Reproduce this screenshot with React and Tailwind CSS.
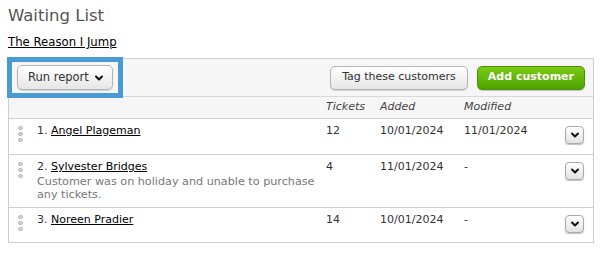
import React from "react";

function Handle() {
  return (
    <div className="flex flex-col gap-[2px] pt-[3px] w-[6px] items-center">
      <span className="block w-[5px] h-[4px] rounded-full bg-[#d4d4d4] border border-[#bdbdbd]" />
      <span className="block w-[5px] h-[4px] rounded-full bg-[#d4d4d4] border border-[#bdbdbd]" />
      <span className="block w-[5px] h-[4px] rounded-full bg-[#d4d4d4] border border-[#bdbdbd]" />
    </div>
  );
}

function Chevron({ className = "" }) {
  return (
    <svg viewBox="0 0 10 10" className={className}>
      <path d="M2 3.5 L5 6.5 L8 3.5" fill="none" stroke="#111" strokeWidth="2" strokeLinecap="round" strokeLinejoin="round" />
    </svg>
  );
}

function MenuBtn() {
  return (
    <button className="w-[19px] h-[18px] rounded-[4px] border border-[#a9a9a9] bg-gradient-to-b from-white to-[#e2e2e2] shadow-[0_1px_1px_rgba(0,0,0,0.25)] flex items-center justify-center">
      <Chevron className="w-[10px] h-[10px]" />
    </button>
  );
}

const rows = [
  { n: 1, name: "Angel Plageman", t: "12", a: "10/01/2024", m: "11/01/2024", h: "h-[36px]" },
  { n: 2, name: "Sylvester Bridges", note: "Customer was on holiday and unable to purchase any tickets.", t: "4", a: "11/01/2024", m: "-", h: "h-[53px]" },
  { n: 3, name: "Noreen Pradier", t: "14", a: "10/01/2024", m: "-", h: "h-[34px]" },
];

export default function App() {
  return (
    <div className="w-[604px] h-[255px] bg-white px-[8px] pt-[5px] text-[11px] text-[#333]" style={{ fontFamily: "Verdana, 'DejaVu Sans', sans-serif" }}>
      <h1 className="text-[16.5px] leading-[22px] text-[#555] font-normal">Waiting List</h1>
      <a className="block mt-[8px] text-[11.7px] leading-[14px] text-black underline">The Reason I Jump</a>
      <div className="relative mt-[9px] w-[586px] border border-[#cfcfcf]">
        <div className="h-[38px] bg-[#f6f6f6] border-b border-[#d9d9d9] flex items-center px-[8px]">
          <button className="h-[25px] pl-[10px] pr-[8px] rounded-[5px] border border-[#b3b3b3] bg-gradient-to-b from-white to-[#e6e6e6] shadow-[0_1px_1px_rgba(0,0,0,0.15)] flex items-center gap-[5px] text-[11.5px] text-[#333]">
            Run report
            <Chevron className="w-[10px] h-[10px]" />
          </button>
          <div className="flex-1" />
          <button className="h-[24px] px-[11px] rounded-[5px] border border-[#b3b3b3] bg-gradient-to-b from-white to-[#e6e6e6] shadow-[0_1px_1px_rgba(0,0,0,0.15)] text-[11px] text-[#333]">
            Tag these customers
          </button>
          <button className="ml-[9px] h-[24px] px-[10px] rounded-[5px] border border-[#4c8f0b] bg-gradient-to-b from-[#7acb12] to-[#4fa300] text-[11px] font-bold text-white shadow-[0_1px_1px_rgba(0,0,0,0.2)]">
            Add customer
          </button>
        </div>
        <div className="h-[22px] bg-[#f6f6f6] border-b border-[#cfcfcf] flex items-center italic text-[#444]">
          <div className="w-[317px]" />
          <div className="w-[54px]">Tickets</div>
          <div className="w-[84px]">Added</div>
          <div>Modified</div>
        </div>
        {rows.map((r, i) => (
          <div key={r.n} className={`flex items-start pt-[4px] ${r.h} ${i < rows.length - 1 ? "border-b border-[#cfcfcf]" : ""}`}>
            <div className="w-[28px] pl-[8px] pr-[14px]"><Handle /></div>
            <div className="w-[289px] leading-[15px]">
              <div className="text-[11px]">
                {r.n}. <span className="underline text-black">{r.name}</span>
              </div>
              {r.note && <div className="text-[#777] text-[11.2px] leading-[13px] mt-[1px]">{r.note}</div>}
            </div>
            <div className="w-[54px] text-[11px] leading-[15px]">{r.t}</div>
            <div className="w-[84px] text-[11px] leading-[15px]">{r.a}</div>
            <div className="w-[100px] text-[11px] leading-[15px]">{r.m}</div>
            <div className="pt-[3px] pl-[1px]"><MenuBtn /></div>
          </div>
        ))}
        <div className="absolute left-[-2px] top-[-2px] w-[116px] h-[41px] border-[5px] border-[#4a9bd3] pointer-events-none" />
      </div>
    </div>
  );
}
